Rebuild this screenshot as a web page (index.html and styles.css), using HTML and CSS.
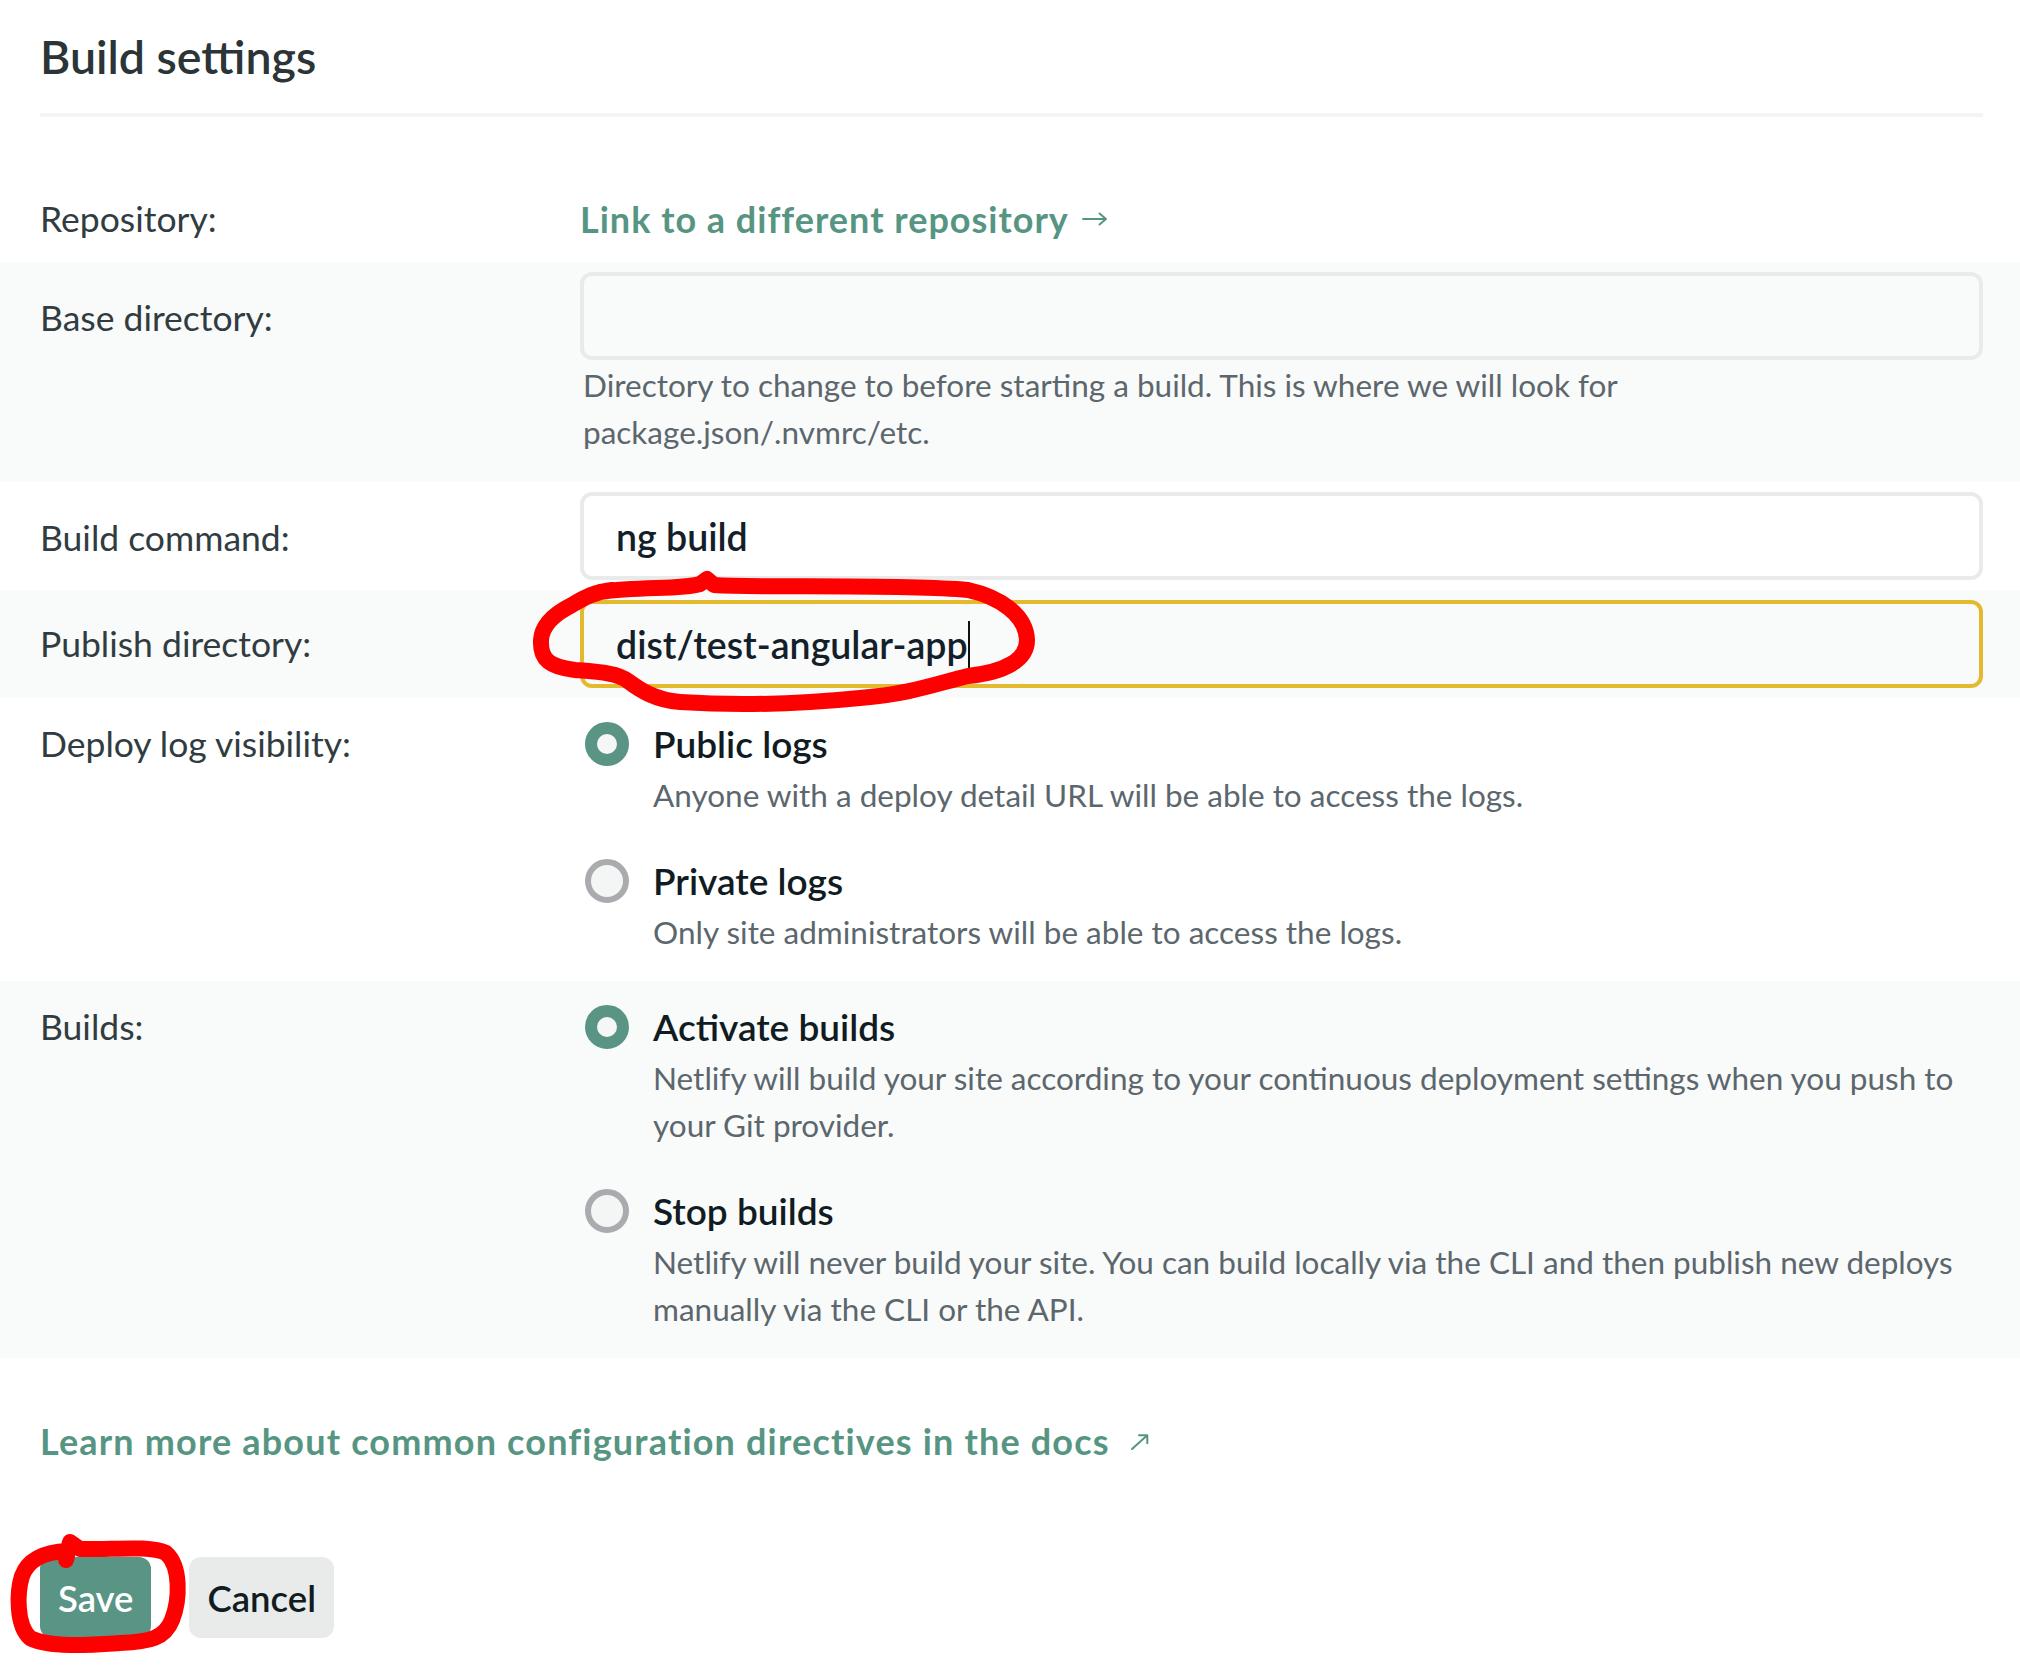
FILE: index.html
```html
<!DOCTYPE html>
<html lang="en">
<head>
<meta charset="utf-8">
<title>Build settings</title>
<link rel="stylesheet" href="styles.css">
</head>
<body>
<div class="page">
  <div class="section-head">
    <h1 class="title">Build settings</h1>
  </div>

  <div class="form">
    <div class="row row-repo">
      <div class="label">Repository:</div>
      <div class="field field-repo">
        <a class="link" href="#">Link to a different repository
          <svg class="arrow-right" width="26" height="14" viewBox="0 0 26 14" aria-hidden="true"><path d="M1 7h23M17.5 1.5l6.5 5.5-6.5 5.5" fill="none" stroke="currentColor" stroke-width="2" stroke-linecap="round" stroke-linejoin="round"/></svg>
        </a>
      </div>
    </div>

    <div class="row shaded">
      <div class="label label-offset">Base directory:</div>
      <div class="field">
        <div class="input"></div>
        <p class="help">Directory to change to before starting a build. This is where we will look for package.json/.nvmrc/etc.</p>
      </div>
    </div>

    <div class="row">
      <div class="label label-offset">Build command:</div>
      <div class="field">
        <div class="input">ng build</div>
      </div>
    </div>

    <div class="row shaded">
      <div class="label">Publish directory:</div>
      <div class="field">
        <div class="input focused">dist/test-angular-app<span class="caret"></span></div>
      </div>
    </div>

    <div class="row row-radio">
      <div class="label">Deploy log visibility:</div>
      <div class="field options">
        <div class="option">
          <span class="radio checked"></span>
          <div class="option-body">
            <div class="option-title">Public logs</div>
            <div class="option-desc">Anyone with a deploy detail URL will be able to access the logs.</div>
          </div>
        </div>
        <div class="option">
          <span class="radio"></span>
          <div class="option-body">
            <div class="option-title">Private logs</div>
            <div class="option-desc">Only site administrators will be able to access the logs.</div>
          </div>
        </div>
      </div>
    </div>

    <div class="row row-radio shaded">
      <div class="label">Builds:</div>
      <div class="field options">
        <div class="option">
          <span class="radio checked"></span>
          <div class="option-body">
            <div class="option-title">Activate builds</div>
            <div class="option-desc">Netlify will build your site according to your continuous deployment settings when you push to your Git provider.</div>
          </div>
        </div>
        <div class="option">
          <span class="radio"></span>
          <div class="option-body">
            <div class="option-title">Stop builds</div>
            <div class="option-desc">Netlify will never build your site. You can build locally via the CLI and then publish new deploys manually via the CLI or the API.</div>
          </div>
        </div>
      </div>
    </div>
  </div>

  <div class="learn-wrap">
    <a class="learn" href="#">Learn more about common configuration directives in the docs
      <svg class="arrow-ne" width="20" height="18" viewBox="0 0 20 18" aria-hidden="true"><path d="M2 16L17 2.5M9 2.3h8.3v8" fill="none" stroke="currentColor" stroke-width="2" stroke-linecap="round" stroke-linejoin="round"/></svg>
    </a>
  </div>

  <div class="actions">
    <button class="btn btn-primary" type="button">Save</button>
    <button class="btn btn-secondary" type="button">Cancel</button>
  </div>
</div>

<svg class="annot" width="2020" height="1668" viewBox="0 0 2020 1668" aria-hidden="true">
  <path d="M600 592 C640 586 680 590 700 584 L707 579 L714 585 C760 588 900 584 968 590 C1000 597 1026 615 1027 640 C1027 660 1005 672 968 676 C935 684 910 694 860 698 C800 704 740 706 680 702 C655 700 640 690 628 681 C618 673 600 672 575 670 C550 667 540 660 541 640 C542 624 556 613 572 605 C585 597 595 592 612 590" fill="none" stroke="#ff0000" stroke-width="16" stroke-linecap="round" stroke-linejoin="round"/>
  <path d="M66 1560 L70 1542 L80 1549 C110 1550 150 1545 166 1553 C181 1566 180 1600 172 1620 C165 1638 150 1642 120 1643 C90 1645 50 1648 30 1638 C16 1625 17 1592 22 1576 C28 1560 42 1552 68 1551" fill="none" stroke="#ff0000" stroke-width="16" stroke-linecap="round" stroke-linejoin="round"/>
</svg>
</body>
</html>
```

FILE: styles.css
```css
* { box-sizing: border-box; }
html, body { margin: 0; padding: 0; }
body {
  font-family: Lato, "Open Sans", sans-serif;
  background: #ffffff;
  color: #313c41;
  position: relative;
  min-height: 1668px;
}
.section-head {
  margin: 0 37px 0 40px;
  padding: 30px 0;
  border-bottom: 4px solid #f3f5f5;
}
.title {
  margin: 0;
  font-size: 46.5px;
  line-height: 53px;
  font-weight: 600;
  color: #2b3437;
}
.form { margin-top: 59px; }
.row {
  display: grid;
  grid-template-columns: 540px 1fr;
  padding: 10px 37px 10px 40px;
}
.shaded { background: #f9fafa; }
.label {
  font-size: 35.5px;
  line-height: 88px;
  color: #313c41;
}
.label-offset { line-height: 92px; height: 88px; }
.row-repo .label { line-height: 66px; }
.field-repo {
  height: 66px;
  display: flex;
  align-items: center;
}
.link {
  font-size: 36px;
  line-height: 44px;
  letter-spacing: 1px;
  font-weight: 700;
  color: #579583;
  text-decoration: none;
  display: inline-flex;
  align-items: center;
  gap: 13px;
}
.input {
  height: 88px;
  border: 4px solid #e9ebeb;
  border-radius: 12px;
  padding: 0 32px;
  display: flex;
  align-items: center;
  font-size: 37.5px;
  font-weight: 600;
  color: #13202a;
}
.input.focused { border-color: #e3b92d; }
.caret {
  display: inline-block;
  width: 2px;
  height: 47px;
  background: #111;
}
.help {
  margin: 2px 0 16px 3px;
  font-size: 31.5px;
  line-height: 47px;
  color: #5c676d;
  max-width: 1120px;
}
.row-radio { padding-top: 24px; padding-bottom: 25px; }
.row-radio .label { line-height: 44px; }
.options {
  display: flex;
  flex-direction: column;
  gap: 40px;
  padding-left: 5px;
}
.option { display: flex; gap: 24px; align-items: flex-start; }
.radio {
  flex: none;
  width: 44px;
  height: 44px;
  border-radius: 50%;
  border: 6px solid #a9abae;
  background: #f4f6f6;
}
.radio.checked { border: 12px solid #5a9485; background: #f5f7f7; }
.option-title {
  font-size: 37px;
  font-weight: 600;
  line-height: 44px;
  color: #111c22;
}
.option-desc {
  margin-top: 6px;
  font-size: 31.5px;
  line-height: 47px;
  color: #5c676d;
}
.learn-wrap {
  margin: 60px 0 0 40px;
  height: 47px;
  display: flex;
  align-items: center;
}
.learn {
  display: inline-flex;
  align-items: center;
  gap: 20px;
  font-size: 36px;
  line-height: 47px;
  letter-spacing: 1.17px;
  font-weight: 700;
  color: #579583;
  text-decoration: none;
}
.actions {
  display: flex;
  gap: 38px;
  margin: 92px 0 0 40px;
}
.btn {
  height: 81px;
  padding: 0 18px;
  border: 0;
  border-radius: 12px;
  font-family: inherit;
  font-size: 36.5px;
  font-weight: 600;
}
.btn-primary { background: #5a9485; color: #ffffff; }
.btn-secondary { background: #e9ebeb; color: #111c22; }
.annot {
  position: absolute;
  top: 0;
  left: 0;
  pointer-events: none;
}
```
